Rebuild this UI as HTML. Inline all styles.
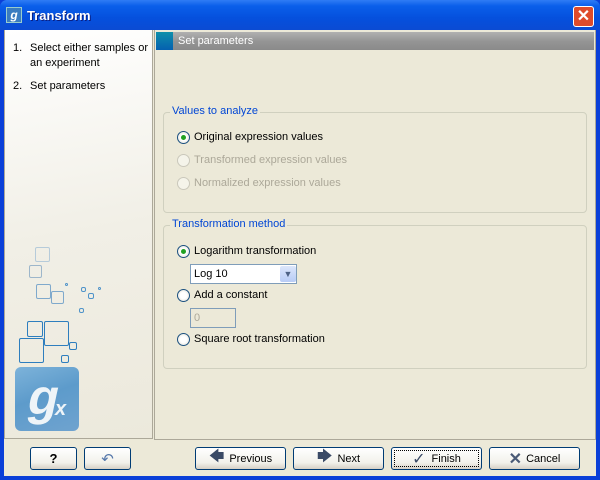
<!DOCTYPE html>
<html><head><style>
*{box-sizing:border-box;margin:0;padding:0}
body{width:600px;height:480px;overflow:hidden;font-family:"Liberation Sans",sans-serif;font-size:11px;background:#0A3FD8;position:relative}
.abs{position:absolute}
.title{left:0;top:0;width:600px;height:30px;background:linear-gradient(#2F7CF5 0%,#0A5FEA 20%,#0550DD 60%,#0B4BD3 100%);border-radius:7px 7px 0 0}
.frame{left:4px;top:30px;width:592px;height:446px;background:#ECE9D8}
.btn{position:absolute;height:23px;border:1px solid #003C74;border-radius:3px;background:linear-gradient(#FFFFFF,#F2F1EB 70%,#D6D0C5);font-size:11px;display:flex;align-items:center;justify-content:center;color:#000}
.grp{position:absolute;border:1px solid #D0D0BF;border-radius:4px}
.lg{position:absolute;top:-8px;left:6px;background:#ECE9D8;color:#0046D5;padding:0 2px;font-size:11px}
.rad{position:absolute;width:13px;height:13px;border-radius:50%;border:1px solid #1C5180;background:radial-gradient(#fff 40%,#DCD9CD)}
.rad.dis{border-color:#CAC8BB;background:#F5F4EA}
.rad.on::after{content:"";position:absolute;left:3px;top:3px;width:5px;height:5px;border-radius:50%;background:#21A121}
.lbl{position:absolute;font-size:11px}
.dis2{color:#ACA899}
.sq{position:absolute;border:1px solid #4F93C9;border-radius:2px}
</style></head><body>
<div class="abs title"></div>
<div class="abs" style="left:6px;top:7px;width:16px;height:16px;background:#3A7CC0;border:1px solid #9CC;color:#fff;font:bold italic 12px 'Liberation Sans';text-align:center;line-height:14px">g</div>
<div class="abs" style="left:27px;top:8px;color:#fff;font-weight:bold;font-size:13px;text-shadow:1px 1px #0A1E80">Transform</div>
<div class="abs" style="left:573px;top:6px;width:21px;height:21px;background:#DF4B2A;border:1px solid #fff;border-radius:3px;color:#fff;font:bold 16px 'Liberation Sans';text-align:center;line-height:19px">✕</div>
<div class="abs frame"></div>
<div class="abs" style="left:4px;top:30px;width:149px;height:409px;background:linear-gradient(170deg,#FFFFFF,#F1EFE6 50%,#ECE9DC);border:1px solid #ACA899;border-top:none"></div>
<div class="lbl" style="left:13px;top:41px;line-height:15px">1.</div>
<div class="lbl" style="left:30px;top:41px;line-height:15px">Select either samples or<br>an experiment</div>
<div class="lbl" style="left:13px;top:80px">2.</div>
<div class="lbl" style="left:30px;top:80px">Set parameters</div>
<div class="sq" style="left:35px;top:247px;width:15px;height:15px;border-color:#B6CBDA"></div>
<div class="sq" style="left:29px;top:265px;width:13px;height:13px;border-color:#9DB6CA"></div>
<div class="sq" style="left:36px;top:284px;width:15px;height:15px;border-color:#7FA9CC"></div>
<div class="sq" style="left:51px;top:291px;width:13px;height:13px;border-color:#7FA9CC"></div>
<div class="sq" style="left:65px;top:283px;width:3px;height:3px"></div>
<div class="sq" style="left:81px;top:287px;width:5px;height:5px"></div>
<div class="sq" style="left:88px;top:293px;width:6px;height:6px"></div>
<div class="sq" style="left:98px;top:287px;width:3px;height:3px"></div>
<div class="sq" style="left:79px;top:308px;width:5px;height:5px"></div>
<div class="sq" style="left:27px;top:321px;width:16px;height:16px;border-color:#2E7EBE"></div>
<div class="sq" style="left:44px;top:321px;width:25px;height:25px;border-color:#2E7EBE"></div>
<div class="sq" style="left:19px;top:338px;width:25px;height:25px;border-color:#2E7EBE"></div>
<div class="sq" style="left:69px;top:342px;width:8px;height:8px;border-color:#2E7EBE"></div>
<div class="sq" style="left:61px;top:355px;width:8px;height:8px;border-color:#2E7EBE"></div>
<div class="abs" style="left:15px;top:367px;width:64px;height:64px;border-radius:6px;background:linear-gradient(160deg,#7DB3DA,#5D9BCB 45%,#6FA3CF)"></div>
<div class="abs" style="left:29px;top:367px;color:#EEF4F8;font:bold 50px 'Liberation Sans';line-height:60px;transform:skewX(-12deg)">g</div>
<div class="abs" style="left:55px;top:398px;color:#EEF4F8;font:italic bold 20px 'Liberation Sans'">x</div>
<div class="abs" style="left:154px;top:30px;width:442px;height:410px;border:1px solid #ACA899;border-top:none;background:#ECE9D8"></div>
<div class="abs" style="left:156px;top:32px;width:438px;height:18px;background:linear-gradient(#B0B0B0,#959595 50%,#8A8A8A)"></div>
<div class="abs" style="left:156px;top:32px;width:17px;height:18px;background:linear-gradient(#0F8FAA,#0560B0)"></div>
<div class="abs" style="left:178px;top:35px;color:#fff;font-size:11px">Set parameters</div>
<div class="grp" style="left:163px;top:112px;width:424px;height:101px"><span class="lg">Values to analyze</span></div>
<div class="rad on" style="left:177px;top:131px"></div><div class="lbl" style="left:194px;top:131px">Original expression values</div>
<div class="rad dis" style="left:177px;top:154px"></div><div class="lbl dis2" style="left:194px;top:154px">Transformed expression values</div>
<div class="rad dis" style="left:177px;top:177px"></div><div class="lbl dis2" style="left:194px;top:177px">Normalized expression values</div>
<div class="grp" style="left:163px;top:225px;width:424px;height:144px"><span class="lg">Transformation method</span></div>
<div class="rad on" style="left:177px;top:245px"></div><div class="lbl" style="left:194px;top:245px">Logarithm transformation</div>
<div class="abs" style="left:190px;top:264px;width:107px;height:20px;border:1px solid #7F9DB9;background:#fff"></div>
<div class="lbl" style="left:194px;top:268px">Log 10</div>
<div class="abs" style="left:280px;top:266px;width:16px;height:16px;background:linear-gradient(#DCE6FB,#B8CCF6);border-radius:2px;color:#4D6185;font-size:9px;text-align:center;line-height:16px">▼</div>
<div class="rad" style="left:177px;top:289px"></div><div class="lbl" style="left:194px;top:289px">Add a constant</div>
<div class="abs" style="left:190px;top:308px;width:46px;height:20px;border:1px solid #7F9DB9;background:#ECE9D8;color:#ACA899;padding:3px 3px">0</div>
<div class="rad" style="left:177px;top:333px"></div><div class="lbl" style="left:194px;top:333px">Square root transformation</div>
<div class="btn" style="left:30px;top:447px;width:47px;font-weight:bold;font-size:13px">?</div>
<div class="btn" style="left:84px;top:447px;width:47px;color:#5577AA;font-size:15px">↶</div>
<div class="btn" style="left:195px;top:447px;width:91px"><span style="color:#3A4A66;font-size:15px;margin-right:5px">🡄</span>Previous</div>
<div class="btn" style="left:293px;top:447px;width:91px"><span style="color:#3A4A66;font-size:15px;margin-right:5px">🡆</span>Next</div>
<div class="btn" style="left:391px;top:447px;width:91px;outline:1px dotted #000;outline-offset:-4px"><span style="color:#3A4A66;font-size:16px;margin-right:6px">✓</span>Finish</div>
<div class="btn" style="left:489px;top:447px;width:91px"><span style="color:#4A5A76;font-size:16px;font-weight:bold;margin-right:4px">✕</span>Cancel</div>
</body></html>
